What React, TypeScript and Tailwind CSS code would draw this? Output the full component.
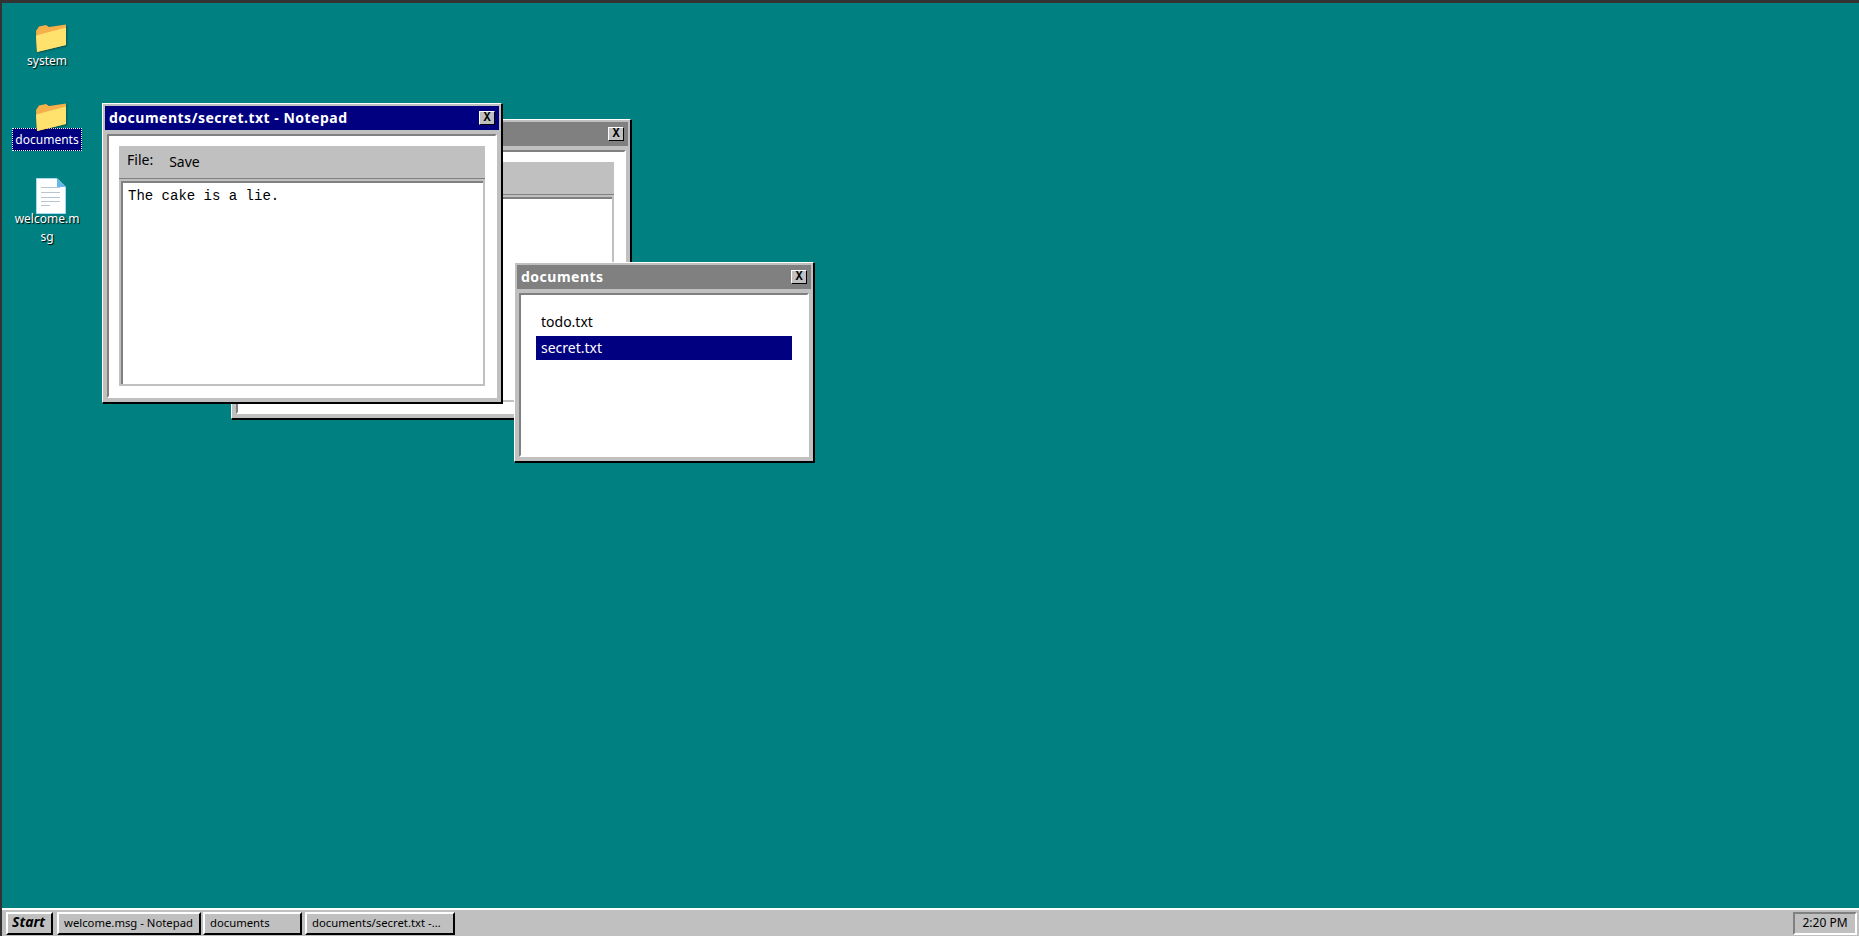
const ui = "font-['Noto_Sans',sans-serif]";

function Folder() {
  return (
    <svg width="32" height="30" viewBox="0 0 32 30" className="relative z-10 drop-shadow-[1px_1px_1px_rgba(0,0,0,0.35)]">
      <path d="M0 7 L3 2.5 L10 1 L13 3 L30 0.5 L30 21 L1 28 Z" fill="#f5b04c" />
      <path d="M0 11.5 L30 3.5 L30 21 L1 28 Z" fill="#ffe16e" />
    </svg>
  );
}

function DocIcon() {
  return (
    <svg width="30" height="36" viewBox="0 0 30 36" className="relative z-10 -mt-[4px]">
      <path d="M0.5 0.5 H21 L29.5 9 V35.5 H0.5 Z" fill="#fff" stroke="#a8d8f4" strokeWidth="1" />
      <path d="M21 0.5 L29.5 9 H21 Z" fill="#62b8e8" />
      <path d="M5 9.5 H24 M5 14.5 H24 M5 19.5 H24 M5 23.5 H24 M5 27.5 H14" stroke="#b9c6cf" strokeWidth="1" />
    </svg>
  );
}

function DesktopIcon({ label, selected, icon }: { label: string; selected?: boolean; icon: React.ReactNode }) {
  return (
    <div className={`w-[70px] h-[79px] flex flex-col ${ui}`}>
      <div className="h-[25px] ml-[24px]">{icon}</div>
      <div
        className={`w-[70px] px-[1px] pt-[2px] pb-[1px] text-center text-[12px] leading-[18px] break-all text-white ${
          selected
            ? "bg-[#000080] border border-dotted border-white"
            : "[text-shadow:1px_1px_1px_#000] border border-transparent"
        }`}
      >
        {label}
      </div>
    </div>
  );
}

function CloseBtn() {
  return (
    <div className="w-[16px] h-[14px] bg-[#c0c0c0] border border-t-white border-l-white border-r-black border-b-black flex items-center justify-center text-[12px] leading-none font-bold text-black font-['Liberation_Mono',monospace]">
      X
    </div>
  );
}

function Win({
  title,
  active,
  className,
  children,
}: {
  title: string;
  active?: boolean;
  className: string;
  children: React.ReactNode;
}) {
  return (
    <div className={`absolute flex flex-col bg-[#c0c0c0] border border-t-white border-l-white border-r-black border-b-black shadow-[1px_1px_0_#000] p-[2px] ${className}`}>
      <div className={`h-[24px] shrink-0 flex items-center justify-between pl-[4px] pr-[4px] ${active ? "bg-[#000080]" : "bg-[#808080]"}`}>
        <span className={`mb-[2px] text-white font-bold text-[14px] tracking-[0.5px] ${ui}`}>{title}</span>
        <CloseBtn />
      </div>
      <div className="mt-[4px] mx-[2px] mb-[2px] flex-1 min-h-0 bg-white border-2 border-t-[#808080] border-l-[#808080] border-r-white border-b-white flex flex-col">
        {children}
      </div>
    </div>
  );
}

function NotepadBody({ text }: { text: string }) {
  return (
    <div className="flex-1 flex flex-col p-[10px] min-h-0">
      <div className={`h-[33px] shrink-0 bg-[#c0c0c0] border-b border-[#808080] flex text-[14px] text-black ${ui}`}>
        <span className="ml-[8px] mt-[3px]">File:</span>
        <span className="ml-[16px] mt-[5px]">Save</span>
      </div>
      <div className="flex-1 flex flex-col bg-[#c0c0c0] p-[2px]">
        <div className="flex-1 bg-white border-t-2 border-l-2 border-[#808080] pl-[5px] pr-[6px] pt-[3px] text-[14px] leading-[20px] text-black font-['Liberation_Mono',monospace]">
          {text}
        </div>
      </div>
    </div>
  );
}

function TaskBtn({ label, className }: { label: string; className: string }) {
  return (
    <div className={`h-[23px] shrink-0 bg-[#c0c0c0] border-2 border-t-white border-l-white border-r-black border-b-black pl-[5px] text-[11.3px] leading-[17px] text-black truncate ${ui} ${className}`}>
      {label}
    </div>
  );
}

export default function App() {
  return (
    <div className="relative w-[1859px] h-[936px] overflow-hidden bg-[#333] pl-[2px] pt-[3px]">
      <div className="relative w-full h-full bg-[#008080] flex flex-col">
        <div className="flex-1 relative min-h-0">
          <div className="absolute left-[10px] top-[21px] flex flex-col">
            <DesktopIcon label="system" icon={<Folder />} />
            <DesktopIcon label="documents" selected icon={<Folder />} />
            <DesktopIcon label="welcome.msg" icon={<DocIcon />} />
          </div>

          <Win title="welcome.msg - Notepad" className="left-[229px] top-[116px] w-[400px] h-[300px]">
            <NotepadBody text="" />
          </Win>

          <Win title="documents/secret.txt - Notepad" active className="left-[100px] top-[100px] w-[400px] h-[300px]">
            <NotepadBody text="The cake is a lie." />
          </Win>

          <Win title="documents" className="left-[512px] top-[259px] w-[300px] h-[200px]">
            <div className={`p-[15px] text-[14px] text-black ${ui}`}>
              <div className="h-[26px] px-[5px] leading-[24px]">todo.txt</div>
              <div className="h-[24px] px-[5px] leading-[24px] bg-[#000080] text-white">secret.txt</div>
            </div>
          </Win>
        </div>

        <div className="h-[28px] shrink-0 bg-[#c0c0c0] border-t-2 border-white flex items-start pt-[2px] pl-[4px] pr-[2px]">
          <div className={`w-[47px] h-[23px] shrink-0 bg-[#c0c0c0] border-2 border-t-white border-l-white border-r-black border-b-black pl-[4px] text-[14px] leading-[16px] font-bold italic text-black ${ui}`}>
            Start
          </div>
          <TaskBtn label="welcome.msg - Notepad" className="ml-[4px] w-[144px] pr-[2px]" />
          <TaskBtn label="documents" className="ml-[2px] w-[99px] pr-[2px]" />
          <TaskBtn label="documents/secret.txt - Notepad" className="ml-[3px] w-[150px] pr-[10px]" />
          <div className={`ml-auto w-[64px] h-[23px] border-2 border-t-[#808080] border-l-[#808080] border-r-white border-b-white text-center text-[12px] leading-[17px] text-black ${ui}`}>
            2:20 PM
          </div>
        </div>
      </div>
    </div>
  );
}
